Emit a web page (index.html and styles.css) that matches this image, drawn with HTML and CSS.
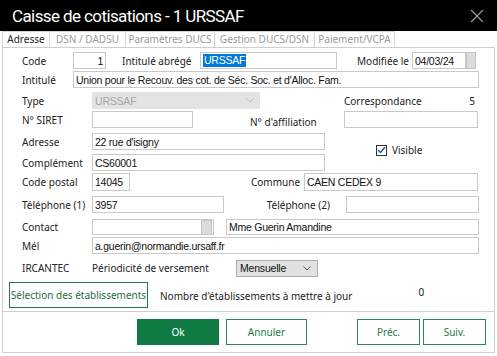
FILE: index.html
```html
<!DOCTYPE html>
<html lang="fr">
<head>
<meta charset="utf-8">
<title>Caisse de cotisations</title>
<link rel="stylesheet" href="styles.css">
</head>
<body>
<div class="window">
  <div class="titlebar">
    <span class="title">Caisse de cotisations - 1 URSSAF</span>
    <svg class="close" width="14" height="14" viewBox="0 0 14 14"><path d="M1 1L13 13M13 1L1 13" stroke="#9a9a9a" stroke-width="1.2" fill="none"/></svg>
  </div>
  <div class="tabs">
    <div class="tab active w1">Adresse</div>
    <div class="tab w2">DSN / DADSU</div>
    <div class="tab w3">Paramètres DUCS</div>
    <div class="tab w4">Gestion DUCS/DSN</div>
    <div class="tab w5">Paiement/VCPA</div>
  </div>
  <div class="frame">
    <div class="panel">
      <div class="row r1">
        <span class="lbl l51">Code</span>
        <span class="inp code">1</span>
        <span class="lbl abrege">Intitulé abrégé</span>
        <span class="inp abr"><span class="sel">URSSAF</span></span>
        <span class="lbl modif">Modifiée le</span>
        <span class="inp date">04/03/24</span>
        <span class="minibtn"></span>
      </div>
      <div class="row r2">
        <span class="lbl l51">Intitulé</span>
        <span class="inp intitule">Union pour le Recouv. des cot. de Séc. Soc. et d'Alloc. Fam.</span>
      </div>
      <div class="dual">
        <div class="dual-left">
          <div class="row r3">
            <span class="lbl l70">Type</span>
            <span class="combo disabled">URSSAF<svg class="arrow" width="8" height="5" viewBox="0 0 8 5"><path d="M0.5 0.5L4 4L7.5 0.5" stroke="#bdbdbd" fill="none"/></svg></span>
          </div>
          <div class="row r4">
            <span class="lbl l70">N° SIRET</span>
            <span class="inp siret"></span>
            <span class="lbl affil">N° d'affiliation</span>
          </div>
        </div>
        <div class="corr">
          <div class="corr-head"><span class="lbl">Correspondance</span><span class="lbl">5</span></div>
          <span class="inp corr-inp"></span>
        </div>
      </div>
      <div class="dual">
        <div class="dual-left">
          <div class="row r5">
            <span class="lbl l70">Adresse</span>
            <span class="inp addr">22 rue d'isigny</span>
          </div>
          <div class="row r6">
            <span class="lbl l70">Complément</span>
            <span class="inp addr">CS60001</span>
          </div>
        </div>
        <div class="visible">
          <span class="check"><svg width="9" height="8" viewBox="0 0 9 8"><path d="M1 4L3.5 6.5L8 1" stroke="#1f5fa8" stroke-width="1.5" fill="none"/></svg></span>
          <span class="lbl">Visible</span>
        </div>
      </div>
      <div class="row r7">
        <span class="lbl l70">Code postal</span>
        <span class="inp cp">14045</span>
        <span class="lbl commune">Commune</span>
        <span class="inp commune-inp">CAEN CEDEX 9</span>
      </div>
      <div class="row r8">
        <span class="lbl l70">Téléphone (1)</span>
        <span class="inp tel1">3957</span>
        <span class="lbl tel2">Téléphone (2)</span>
        <span class="inp tel2-inp"></span>
      </div>
      <div class="row r9">
        <span class="lbl l70">Contact</span>
        <span class="inp contact"><span class="minibtn inner"></span></span>
        <span class="inp contact2">Mme Guerin Amandine</span>
      </div>
      <div class="row r10">
        <span class="lbl l70">Mél</span>
        <span class="inp mel">a.guerin@normandie.ursaff.fr</span>
      </div>
      <div class="row r11">
        <span class="lbl l70">IRCANTEC</span>
        <span class="lbl perio">Périodicité de versement</span>
        <span class="combo mens">Mensuelle<svg class="arrow" width="8" height="5" viewBox="0 0 8 5"><path d="M0.5 0.5L4 4L7.5 0.5" stroke="#555" fill="none"/></svg></span>
      </div>
      <div class="row r12">
        <span class="btn-sel">Sélection des établissements</span>
        <span class="lbl nombre">Nombre d'établissements à mettre à jour</span>
        <span class="lbl zero">0</span>
      </div>
    </div>
    <div class="actions">
      <span class="btn primary ok">Ok</span>
      <span class="btn annuler">Annuler</span>
      <span class="btn prec">Préc.</span>
      <span class="btn suiv">Suiv.</span>
    </div>
  </div>
</div>
</body>
</html>
```
FILE: styles.css
```css
* { box-sizing: border-box; }
html, body { margin: 0; padding: 0; background: #fff; }
body { width: 497px; height: 356px; overflow: hidden; font-family: "Noto Sans", sans-serif; }
.window { width: 497px; }
.titlebar { height: 31px; background: #000; display: flex; align-items: center; justify-content: space-between; padding: 0 13px 0 12px; }
.title { color: #fff; font-family: Roboto, sans-serif; font-size: 17px; letter-spacing: -0.6px; }
.close { margin-top: 1px; }
.tabs { display: flex; height: 16px; padding-left: 2px; }
.tab { height: 16px; border: 1px solid #d4d4d4; border-bottom: none; border-left: none; font-size: 10px; color: #9a9a9a; line-height: 14px; text-align: center; white-space: nowrap; }
.tab.active { border-left: 1px solid #d4d4d4; color: #222; }
.w1 { width: 48px; } .w2 { width: 76px; } .w3 { width: 89px; } .w4 { width: 100px; } .w5 { width: 80px; }
.frame { margin-left: 2px; width: 493px; height: 306px; border: 1px solid #cfcfcf; }
.panel { height: 264px; border-bottom: 1px solid #cfcfcf; padding: 4px 0 0 6px; }
.row { display: flex; align-items: center; padding-left: 13px; }
.lbl { font-size: 10px; color: #222; white-space: nowrap; }
.l51 { width: 51px; }
.l70 { width: 70px; }
.inp { display: flex; align-items: center; height: 17px; border: 1px solid #c9c9c9; background: #fff; font-family: "Liberation Sans", sans-serif; font-size: 10.5px; letter-spacing: -0.25px; color: #111; padding: 0 2px; white-space: nowrap; overflow: hidden; position: relative; }
.r1 { height: 17px; }
.code { width: 33px; justify-content: flex-end; }
.abrege { margin-left: 16px; width: 78px; }
.abr { width: 137px; }
.sel { background: #0078d7; color: #fff; padding: 0 1px; line-height: 13px; }
.modif { width: 75px; text-align: right; padding-right: 3px; }
.date { width: 54px; }
.minibtn { width: 10px; height: 17px; background: #dcdcdc; border: 1px solid #c4c4c4; }
.minibtn.inner { position: absolute; right: 1px; top: 0; height: 15px; width: 11px; }
.r2 { margin-top: 2px; }
.intitule { width: 406px; }
.dual { display: flex; }
.dual-left { width: 335px; }
.r3 { margin-top: 4px; height: 17px; }
.combo { display: flex; align-items: center; justify-content: space-between; height: 17px; padding: 0 6px 0 3px; font-family: "Liberation Sans", sans-serif; font-size: 10.5px; letter-spacing: -0.2px; }
.combo.disabled { width: 168px; background: #e3e3e3; color: #a6a6a6; }
.r4 { margin-top: 2px; }
.siret { width: 101px; }
.affil { margin-left: 57px; align-self: flex-end; margin-bottom: -1px; }
.corr { margin-top: 4px; width: 134px; }
.corr-head { display: flex; justify-content: space-between; height: 17px; align-items: center; padding-right: 3px; }
.corr-inp { width: 134px; margin-top: 2px; }
.r5 { margin-top: 5px; }
.r6 { margin-top: 4px; }
.addr { width: 233px; }
.visible { display: flex; align-items: center; margin-left: 32px; margin-top: 1px; align-self: center; }
.check { width: 11px; height: 11px; border: 1px solid #333; display: flex; align-items: center; justify-content: center; margin-right: 5px; }
.r7 { margin-top: 2px; }
.cp { width: 38px; height: 18px; }
.commune { margin-left: 121px; width: 53px; }
.commune-inp { width: 174px; height: 18px; }
.r8 { margin-top: 5px; }
.tel1 { width: 132px; }
.tel2 { width: 122px; text-align: right; padding-right: 16px; }
.tel2-inp { width: 133px; }
.r9 { margin-top: 6px; }
.contact { width: 122px; height: 16px; }
.contact2 { width: 253px; margin-left: 12px; height: 16px; }
.r10 { margin-top: 2px; }
.mel { width: 387px; }
.r11 { margin-top: 5px; height: 18px; }
.perio { width: 144px; }
.mens { width: 82px; background: #e1e1e1; border: 1px solid #adadad; color: #111; }
.r12 { margin-top: 5px; padding-left: 0; }
.btn-sel { width: 139px; height: 26px; border: 1px solid #1e7b4a; display: flex; align-items: center; justify-content: center; font-size: 10px; color: #1e6e43; }
.nombre { margin-left: 12px; margin-top: 2px; }
.zero { margin-left: 66px; margin-top: -6px; }
.actions { display: flex; padding: 7px 0 0 134px; }
.btn { height: 26px; display: flex; align-items: center; justify-content: center; font-size: 10px; border: 1px solid #2a8a57; color: #1f7a49; background: #fff; }
.primary { background: #0f7a44; border-color: #0f7a44; color: #fff; }
.ok { width: 82px; }
.annuler { width: 81px; margin-left: 7px; }
.prec { width: 63px; margin-left: 50px; }
.suiv { width: 63px; margin-left: 3px; }
```
